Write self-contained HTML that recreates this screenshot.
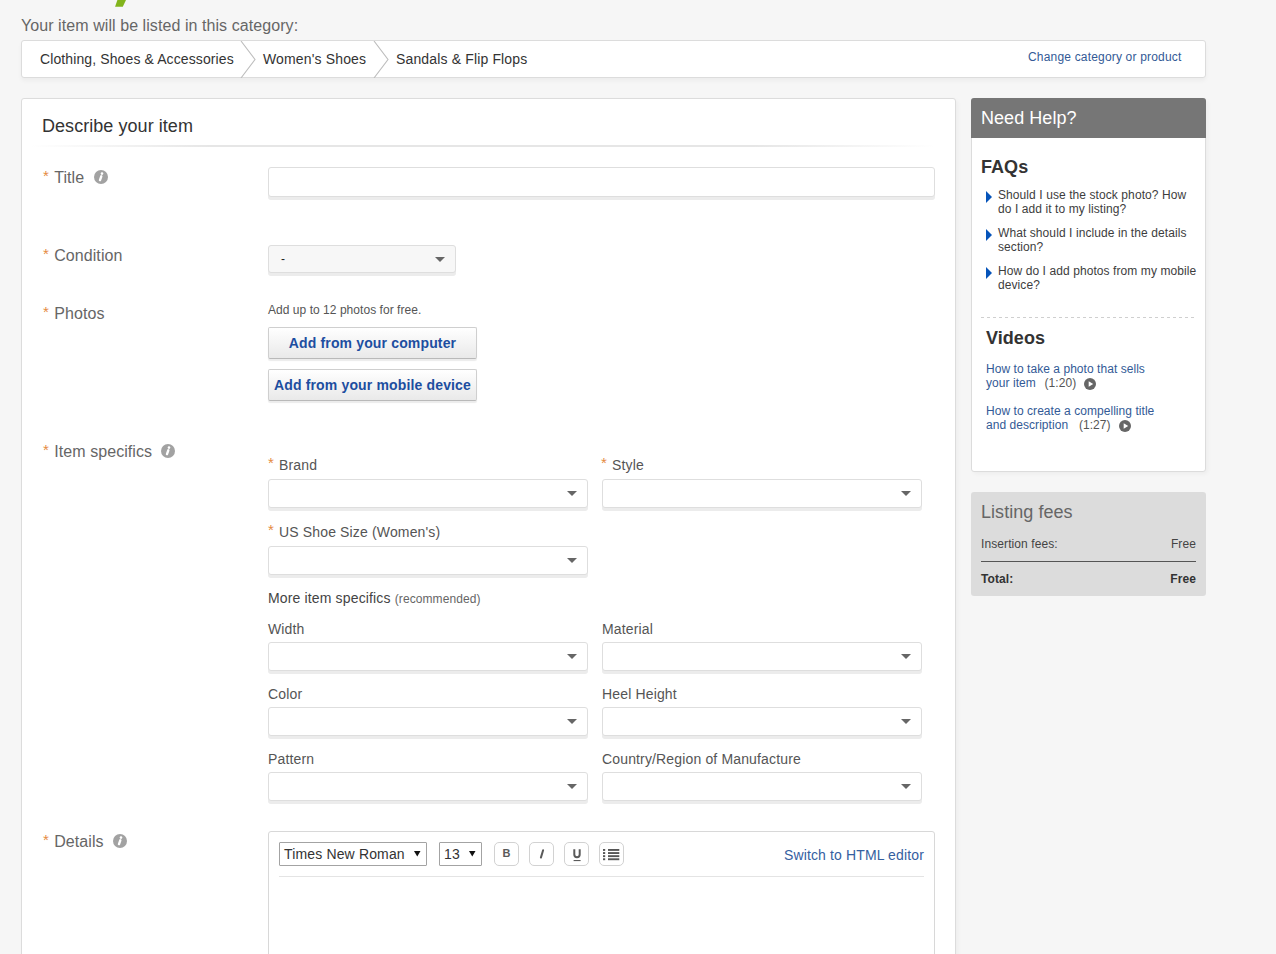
<!DOCTYPE html>
<html><head><meta charset="utf-8">
<style>
*{box-sizing:border-box}
html,body{margin:0;padding:0}
body{width:1276px;height:954px;overflow:hidden;position:relative;background:#f6f6f6;font-family:"Liberation Sans",sans-serif;color:#333}
.a{position:absolute;white-space:nowrap}
.box{position:absolute;background:#fff;border:1px solid #dcdcdc;border-radius:3px}
.lbl{position:absolute;font-size:16px;letter-spacing:0.07px;color:#666;line-height:16px;white-space:nowrap;margin-left:1px;margin-top:1px}
.ast{color:#e58a3f;font-size:15px;margin-right:5.3px;position:relative;top:-2px}
.info{position:absolute;width:14px;height:14px}
.inp,.sel{position:absolute;background:#fff;border:1px solid #dedede;border-radius:3px;box-shadow:0 3px 0 #ececec}
.sel:after{content:"";position:absolute;right:10px;top:11px;border-left:5.5px solid transparent;border-right:5.5px solid transparent;border-top:5px solid #666}
.fl{position:absolute;font-size:14px;letter-spacing:0.15px;color:#555;line-height:14px;white-space:nowrap}
.fl .ast{font-size:15px;margin-right:5px;top:-2px}
.btn{position:absolute;width:209px;height:32px;border:1px solid #cfcfcf;border-bottom-color:#b9b9b9;border-radius:2px;background:linear-gradient(#fff,#e9e9e9);box-shadow:0 2px 1px #ececec;font-weight:bold;font-size:14px;color:#1d4ea0;text-align:center;line-height:31px;letter-spacing:0.15px}
.faq{position:absolute;left:998px;font-size:12px;letter-spacing:0.085px;line-height:14px;color:#3d3d3d;width:205px}
.tri{position:absolute;left:986px;width:0;height:0;border-top:6px solid transparent;border-bottom:6px solid transparent;border-left:6px solid #0654ba}
.vid{position:absolute;left:986px;font-size:12px;letter-spacing:0.05px;line-height:14px;color:#335a96;width:200px}
.vid .t{color:#555;margin-left:2px}
.play{display:inline-block;width:12px;height:12px;vertical-align:-3px;margin-left:8px}

.tb{position:absolute;top:842px;width:25px;height:24px;border:1px solid #d2d2d2;border-radius:5px;background:#fff}.tb svg{display:block}
</style></head>
<body>
<!-- green descender -->
<svg class="a" style="left:0;top:0" width="200" height="10"><polygon points="117.4,0 126,0 122.8,6.8 115.1,6.8" fill="#82b41c"/></svg>

<div class="a" style="left:21px;top:17px;font-size:16px;line-height:18px;color:#666;letter-spacing:0.07px">Your item will be listed in this category:</div>

<!-- breadcrumb -->
<div class="box" style="left:21px;top:40px;width:1185px;height:38px;box-shadow:0 3px 4px rgba(0,0,0,0.04)"></div>
<div class="a" style="left:40px;top:51px;font-size:14px;line-height:16px;color:#333;letter-spacing:0.11px">Clothing, Shoes &amp; Accessories</div>
<svg class="a" style="left:238px;top:41px" width="20" height="37"><polyline points="3,0 17,18.5 3,37" fill="none" stroke="#bdbdbd" stroke-width="1.1"/></svg>
<div class="a" style="left:263px;top:51px;font-size:14px;line-height:16px;color:#333;letter-spacing:0.15px">Women's Shoes</div>
<svg class="a" style="left:371px;top:41px" width="20" height="37"><polyline points="3,0 17,18.5 3,37" fill="none" stroke="#bdbdbd" stroke-width="1.1"/></svg>
<div class="a" style="left:396px;top:51px;font-size:14px;line-height:16px;color:#333;letter-spacing:0.15px">Sandals &amp; Flip Flops</div>
<div class="a" style="left:1028px;top:50px;font-size:12px;line-height:14px;color:#335a96;letter-spacing:0.18px">Change category or product</div>

<!-- main panel -->
<div class="box" style="left:21px;top:98px;width:935px;height:900px;box-shadow:2px 2px 4px rgba(0,0,0,0.04)"></div>
<div class="a" style="left:42px;top:116px;font-size:18px;line-height:20px;color:#333;letter-spacing:0.05px">Describe your item</div>
<div class="a" style="left:30px;top:145px;width:905px;height:2px;background:linear-gradient(90deg,rgba(230,230,230,0),#e6e6e6 20%,#e6e6e6 80%,rgba(230,230,230,0))"></div>

<div class="lbl" style="left:42px;top:169px"><span class="ast">*</span>Title</div>
<div class="info" style="left:94px;top:170px"><svg width="14" height="14" viewBox="0 0 14 14" style="display:block"><circle cx="7" cy="7" r="7" fill="#a2a2a2"/><circle cx="8" cy="3.6" r="1.3" fill="#fff"/><path d="M7.3 6.3 L6 10.1" stroke="#fff" stroke-width="2.4" stroke-linecap="round"/></svg></div>
<div class="inp" style="left:268px;top:167px;width:667px;height:30px"></div>

<div class="lbl" style="left:42px;top:247px"><span class="ast">*</span>Condition</div>
<div class="sel s2" style="left:268px;top:245px;width:188px;height:28px;background:#f7f7f7"></div>
<div class="a" style="left:281px;top:252px;font-size:12px;color:#222;letter-spacing:0.09px">-</div>

<div class="lbl" style="left:42px;top:305px"><span class="ast">*</span>Photos</div>
<div class="a" style="left:268px;top:303px;font-size:12px;line-height:14px;color:#555;letter-spacing:0.04px">Add up to 12 photos for free.</div>
<div class="btn" style="left:268px;top:327px">Add from your computer</div>
<div class="btn" style="left:268px;top:369px">Add from your mobile device</div>

<div class="lbl" style="left:42px;top:443px"><span class="ast">*</span>Item specifics</div>
<div class="info" style="left:161px;top:444px"><svg width="14" height="14" viewBox="0 0 14 14" style="display:block"><circle cx="7" cy="7" r="7" fill="#a2a2a2"/><circle cx="8" cy="3.6" r="1.3" fill="#fff"/><path d="M7.3 6.3 L6 10.1" stroke="#fff" stroke-width="2.4" stroke-linecap="round"/></svg></div>

<div class="fl" style="left:268px;top:458px"><span class="ast">*</span>Brand</div>
<div class="sel" style="left:268px;top:479px;width:320px;height:29px"></div>
<div class="fl" style="left:601px;top:458px"><span class="ast">*</span>Style</div>
<div class="sel" style="left:602px;top:479px;width:320px;height:29px"></div>

<div class="fl" style="left:268px;top:525px"><span class="ast">*</span>US Shoe Size (Women's)</div>
<div class="sel" style="left:268px;top:546px;width:320px;height:29px"></div>

<div class="fl" style="left:268px;top:591px;color:#444">More item specifics <span style="font-size:12px;color:#666;letter-spacing:0.09px">(recommended)</span></div>

<div class="fl" style="left:268px;top:622px">Width</div>
<div class="sel" style="left:268px;top:642px;width:320px;height:29px"></div>
<div class="fl" style="left:602px;top:622px">Material</div>
<div class="sel" style="left:602px;top:642px;width:320px;height:29px"></div>

<div class="fl" style="left:268px;top:687px">Color</div>
<div class="sel" style="left:268px;top:707px;width:320px;height:29px"></div>
<div class="fl" style="left:602px;top:687px">Heel Height</div>
<div class="sel" style="left:602px;top:707px;width:320px;height:29px"></div>

<div class="fl" style="left:268px;top:752px">Pattern</div>
<div class="sel" style="left:268px;top:772px;width:320px;height:29px"></div>
<div class="fl" style="left:602px;top:752px">Country/Region of Manufacture</div>
<div class="sel" style="left:602px;top:772px;width:320px;height:29px"></div>

<div class="lbl" style="left:42px;top:833px"><span class="ast">*</span>Details</div>
<div class="info" style="left:113px;top:834px"><svg width="14" height="14" viewBox="0 0 14 14" style="display:block"><circle cx="7" cy="7" r="7" fill="#a2a2a2"/><circle cx="8" cy="3.6" r="1.3" fill="#fff"/><path d="M7.3 6.3 L6 10.1" stroke="#fff" stroke-width="2.4" stroke-linecap="round"/></svg></div>

<!-- editor -->
<div class="box" style="left:268px;top:831px;width:667px;height:200px;border-color:#d8d8d8"></div>
<div class="a" style="left:279px;top:842px;width:148px;height:24px;border:1px solid #a3a3a3;border-radius:1px;background:#fff"></div>
<div class="a" style="left:284px;top:846px;font-size:14px;line-height:16px;color:#333;letter-spacing:0.15px">Times New Roman</div>
<svg class="a" style="left:414px;top:851px" width="7" height="6"><polygon points="0,0 6.5,0 3.25,5.5" fill="#111"/></svg>
<div class="a" style="left:439px;top:842px;width:43px;height:24px;border:1px solid #a3a3a3;border-radius:1px;background:#fff"></div>
<div class="a" style="left:444px;top:846px;font-size:14px;line-height:16px;color:#333;letter-spacing:0.15px">13</div>
<svg class="a" style="left:469px;top:851px" width="7" height="6"><polygon points="0,0 6.5,0 3.25,5.5" fill="#111"/></svg>
<div class="tb" style="left:494px"><svg width="23" height="22" viewBox="0 0 23 22"><text x="11.5" y="14.3" text-anchor="middle" font-family="Liberation Sans" font-weight="bold" font-size="11" fill="#5a5a5a">B</text></svg></div>
<div class="tb" style="left:529px"><svg width="23" height="22" viewBox="0 0 23 22"><path d="M13.1 7.3 L10.9 14.6" stroke="#5a5a5a" stroke-width="2" stroke-linecap="round"/></svg></div>
<div class="tb" style="left:564px"><svg width="23" height="22" viewBox="0 0 23 22"><path d="M9.3 6.3 V11.6 Q9.3 14.2 12 14.2 Q14.7 14.2 14.7 11.6 V6.3" stroke="#5a5a5a" stroke-width="2" fill="none"/><rect x="8.6" y="17" width="7" height="1.1" fill="#5a5a5a"/></svg></div>
<div class="tb" style="left:599px"><svg width="23" height="22" viewBox="0 0 23 22"><g fill="#555"><rect x="3" y="6" width="2.2" height="1.9"/><rect x="3" y="9.1" width="2.2" height="1.9"/><rect x="3" y="12.2" width="2.2" height="1.9"/><rect x="3" y="15.3" width="2.2" height="1.9"/><rect x="8" y="6" width="11.3" height="1.9"/><rect x="8" y="9.1" width="11.3" height="1.9"/><rect x="8" y="12.2" width="11.3" height="1.9"/><rect x="8" y="15.3" width="11.3" height="1.9"/></g></svg></div>
<div class="a" style="left:784px;top:847px;font-size:14px;line-height:16px;color:#35609f;letter-spacing:0.13px">Switch to HTML editor</div>
<div class="a" style="left:279px;top:876px;width:645px;height:1px;background:#e4e4e4"></div>

<!-- right column -->
<div class="box" style="left:971px;top:98px;width:235px;height:374px;box-shadow:2px 2px 4px rgba(0,0,0,0.04)"></div>
<div class="a" style="left:971px;top:98px;width:235px;height:40px;background:#767676;border-radius:3px 3px 0 0"></div>
<div class="a" style="left:981px;top:108px;font-size:18px;line-height:20px;color:#fff;letter-spacing:0.05px">Need Help?</div>
<div class="a" style="left:981px;top:157px;font-size:18px;line-height:20px;font-weight:bold;color:#333;letter-spacing:0.05px">FAQs</div>

<div class="tri" style="top:191px"></div>
<div class="faq" style="top:188px">Should I use the stock photo? How<br>do I add it to my listing?</div>
<div class="tri" style="top:229px"></div>
<div class="faq" style="top:226px">What should I include in the details<br>section?</div>
<div class="tri" style="top:267px"></div>
<div class="faq" style="top:264px">How do I add photos from my mobile<br>device?</div>

<div class="a" style="left:981px;top:317px;width:216px;height:1px;background:repeating-linear-gradient(90deg,#cfcfcf 0 3px,transparent 3px 6px)"></div>
<div class="a" style="left:986px;top:328px;font-size:18px;line-height:20px;font-weight:bold;color:#333;letter-spacing:0.05px">Videos</div>
<div class="vid" style="top:362px">How to take a photo that sells<br>your item &nbsp;<span class="t">(1:20)</span><svg class="play" width="12" height="12" viewBox="0 0 12 12"><circle cx="6" cy="6" r="6" fill="#666"/><polygon points="4.7,3.3 9.2,6 4.7,8.7" fill="#fff"/></svg></div>
<div class="vid" style="top:404px">How to create a compelling title<br>and description &nbsp;<span class="t" style="margin-left:4px">(1:27)</span><svg class="play" style="margin-left:8px" width="12" height="12" viewBox="0 0 12 12"><circle cx="6" cy="6" r="6" fill="#666"/><polygon points="4.7,3.3 9.2,6 4.7,8.7" fill="#fff"/></svg></div>

<div class="a" style="left:971px;top:492px;width:235px;height:104px;background:#dcdcdc;border-radius:3px"></div>
<div class="a" style="left:981px;top:502px;font-size:18px;line-height:20px;color:#666;letter-spacing:0.05px">Listing fees</div>
<div class="a" style="left:981px;top:537px;font-size:12px;line-height:14px;color:#444;letter-spacing:0.09px">Insertion fees:</div>
<div class="a" style="left:1160px;top:537px;width:36px;text-align:right;font-size:12px;line-height:14px;color:#444;letter-spacing:0.09px">Free</div>
<div class="a" style="left:981px;top:561px;width:215px;height:1px;background:#555"></div>
<div class="a" style="left:981px;top:572px;font-size:12px;line-height:14px;color:#333;font-weight:bold;letter-spacing:0.09px">Total:</div>
<div class="a" style="left:1160px;top:572px;width:36px;text-align:right;font-size:12px;line-height:14px;color:#333;font-weight:bold;letter-spacing:0.09px">Free</div>
</body></html>
